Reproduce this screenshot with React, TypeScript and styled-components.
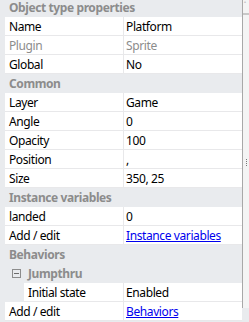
import styled, { createGlobalStyle } from "styled-components";

const GlobalStyle = createGlobalStyle`
  html, body {
    margin: 0;
    padding: 0;
    background: #f3f3f3;
  }
  body {
    font-family: "Noto Sans", "Liberation Sans", sans-serif;
    font-size: 12px;
    letter-spacing: -0.4px;
    color: #000;
  }
`;

const Frame = styled.div`
  width: 249px;
  height: 322px;
  overflow: hidden;
  display: flex;
  background: #e9ebee;
`;

const List = styled.div`
  width: 243px;
  display: flex;
  flex-direction: column;
  margin-top: -2px;
`;

const Side = styled.div`
  position: relative;
  width: 6px;
  border-left: 1px solid #a8a8a8;
  background: #f4f4f4;
  height: 308px;
`;

const Arrow = styled.div`
  position: absolute;
  top: 1px;
  left: 1px;
  font-size: 7px;
  line-height: 7px;
  color: #555;
`;

const Splitter = styled.div`
  position: absolute;
  top: 13px;
  left: 0;
  width: 6px;
  height: 2px;
  background: #c8c8c8;
`;

const Grip = styled.div`
  position: absolute;
  top: 159px;
  left: 3px;
  width: 1px;
  height: 8px;
  background: repeating-linear-gradient(#777 0 1px, transparent 1px 2px);
`;

const Section = styled.div`
  height: 19px;
  display: flex;
  align-items: center;
  padding-left: 9px;
  font-weight: bold;
  color: #8c8c8c;
  white-space: nowrap;
`;

const Group = styled.div`
  height: 19px;
  display: flex;
  align-items: center;
  padding-left: 12px;
  gap: 7px;
  font-weight: bold;
  color: #8c8c8c;
`;

const Toggle = styled.span`
  width: 7px;
  height: 7px;
  border: 1px solid #8c8c8c;
  position: relative;
  &::after {
    content: "";
    position: absolute;
    left: 1px;
    top: 3px;
    width: 5px;
    height: 1px;
    background: #6c6c6c;
  }
`;

const Row = styled.div<{ $indent?: number }>`
  height: 19px;
  display: flex;
  padding-left: ${(p) => p.$indent ?? 5}px;
`;

const Cell = styled.div<{ $muted?: boolean }>`
  height: 18px;
  display: flex;
  align-items: center;
  background: #fff;
  border-bottom: 1px solid #e8e8ea;
  color: ${(p) => (p.$muted ? "#8c8c8c" : "#000")};
  white-space: nowrap;
  overflow: hidden;
`;

const NameCell = styled(Cell)`
  flex: 1;
  padding-left: 4px;
  border-right: 1px solid #e8e8ea;
`;

const ValueCell = styled(Cell)`
  width: 116px;
  padding-left: 2px;
`;

const Link = styled.a`
  color: #0000ee;
  text-decoration: underline;
  cursor: pointer;
`;

type Prop = { name: string; value: React.ReactNode; muted?: boolean; indent?: number };

function PropRow({ name, value, muted, indent }: Prop) {
  return (
    <Row $indent={indent}>
      <NameCell $muted={muted}>{name}</NameCell>
      <ValueCell $muted={muted}>{value}</ValueCell>
    </Row>
  );
}

export default function App() {
  return (
    <Frame>
      <GlobalStyle />
      <List>
        <Section>Object type properties</Section>
        <PropRow name="Name" value="Platform" />
        <PropRow name="Plugin" value="Sprite" muted />
        <PropRow name="Global" value="No" />
        <Section>Common</Section>
        <PropRow name="Layer" value="Game" />
        <PropRow name="Angle" value="0" />
        <PropRow name="Opacity" value="100" />
        <PropRow name="Position" value="," />
        <PropRow name="Size" value="350, 25" />
        <Section>Instance variables</Section>
        <PropRow name="landed" value="0" />
        <PropRow name="Add / edit" value={<Link>Instance variables</Link>} />
        <Section>Behaviors</Section>
        <Group>
          <Toggle />
          Jumpthru
        </Group>
        <PropRow name="Initial state" value="Enabled" indent={24} />
        <PropRow name="Add / edit" value={<Link>Behaviors</Link>} />
      </List>
      <Side>
        <Arrow>˄</Arrow>
        <Splitter />
        <Grip />
      </Side>
    </Frame>
  );
}
